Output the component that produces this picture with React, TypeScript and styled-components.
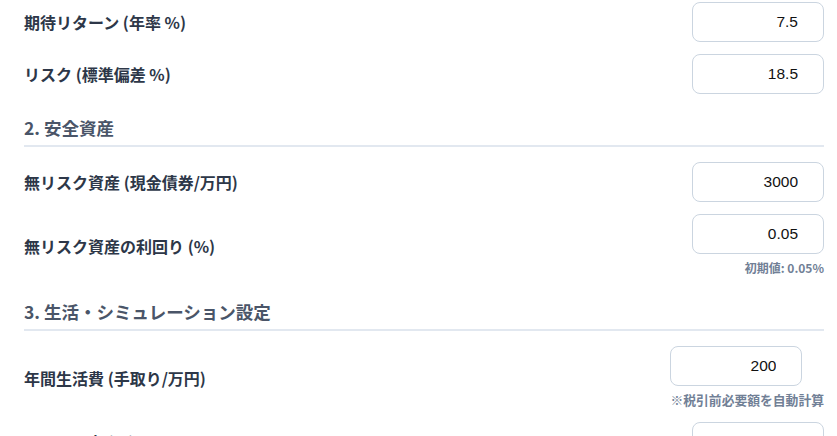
import React from 'react';
import styled, { createGlobalStyle } from 'styled-components';

const GlobalStyle = createGlobalStyle`
  html, body {
    margin: 0;
    padding: 0;
    background: #ffffff;
    overflow: hidden;
  }
  body {
    font-family: "Noto Sans CJK JP", "Noto Sans", sans-serif;
  }
`;

interface Field {
  label: string;
  value: string;
  hint?: string;
  hintSize?: number;
}

interface Section {
  title?: string;
  fields: Field[];
}

const sections: Section[] = [
  {
    fields: [
      { label: '期待リターン (年率 %)', value: '7.5' },
      { label: 'リスク (標準偏差 %)', value: '18.5' },
    ],
  },
  {
    title: '2. 安全資産',
    fields: [
      { label: '無リスク資産 (現金債券/万円)', value: '3000' },
      {
        label: '無リスク資産の利回り (%)',
        value: '0.05',
        hint: '初期値: 0.05%',
        hintSize: 12,
      },
    ],
  },
  {
    title: '3. 生活・シミュレーション設定',
    fields: [
      {
        label: '年間生活費 (手取り/万円)',
        value: '200',
        hint: '※税引前必要額を自動計算',
        hintSize: 12.8,
      },
      { label: 'インフレ率 (%)', value: '1.5' },
    ],
  },
];

const Page = styled.div`
  width: 800px;
  margin-left: 24px;
  padding-top: 2px;
`;

const SectionBlock = styled.section`
  & + & {
    margin-top: 20px;
  }
`;

const SectionTitle = styled.h2`
  margin: 0 0 15px;
  padding-bottom: 4px;
  font-size: 17.5px;
  line-height: 27px;
  font-weight: 700;
  color: #4a5568;
  border-bottom: 2px solid #e2e8f0;
`;

const Rows = styled.div`
  display: flex;
  flex-direction: column;
  gap: 12px;
`;

const Row = styled.div`
  display: flex;
  align-items: center;
  justify-content: space-between;
`;

const Label = styled.label`
  font-size: 16px;
  font-weight: 700;
  color: #2d3748;
  line-height: 24px;
`;

const Control = styled.div`
  flex: none;
`;

const NumberInput = styled.input`
  display: block;
  box-sizing: border-box;
  width: 132px;
  height: 40px;
  margin: 0;
  padding: 0 25px 0 10px;
  border: 1px solid #cbd5e0;
  border-radius: 8px;
  background: #ffffff;
  font-family: "Liberation Sans", Arial, sans-serif;
  font-size: 15.5px;
  color: #111111;
  text-align: right;
  outline: none;
`;

const Hint = styled.div<{ $size: number }>`
  margin-top: 4px;
  font-size: ${p => p.$size}px;
  line-height: 20px;
  font-weight: 700;
  color: #718096;
  text-align: right;
  white-space: nowrap;
`;

export default function App() {
  return (
    <>
      <GlobalStyle />
      <Page>
        {sections.map((section, i) => (
          <SectionBlock key={i}>
            {section.title && <SectionTitle>{section.title}</SectionTitle>}
            <Rows>
              {section.fields.map(field => (
                <Row key={field.label}>
                  <Label>{field.label}</Label>
                  <Control>
                    <NumberInput type="text" defaultValue={field.value} />
                    {field.hint && (
                      <Hint $size={field.hintSize ?? 12}>{field.hint}</Hint>
                    )}
                  </Control>
                </Row>
              ))}
            </Rows>
          </SectionBlock>
        ))}
      </Page>
    </>
  );
}
